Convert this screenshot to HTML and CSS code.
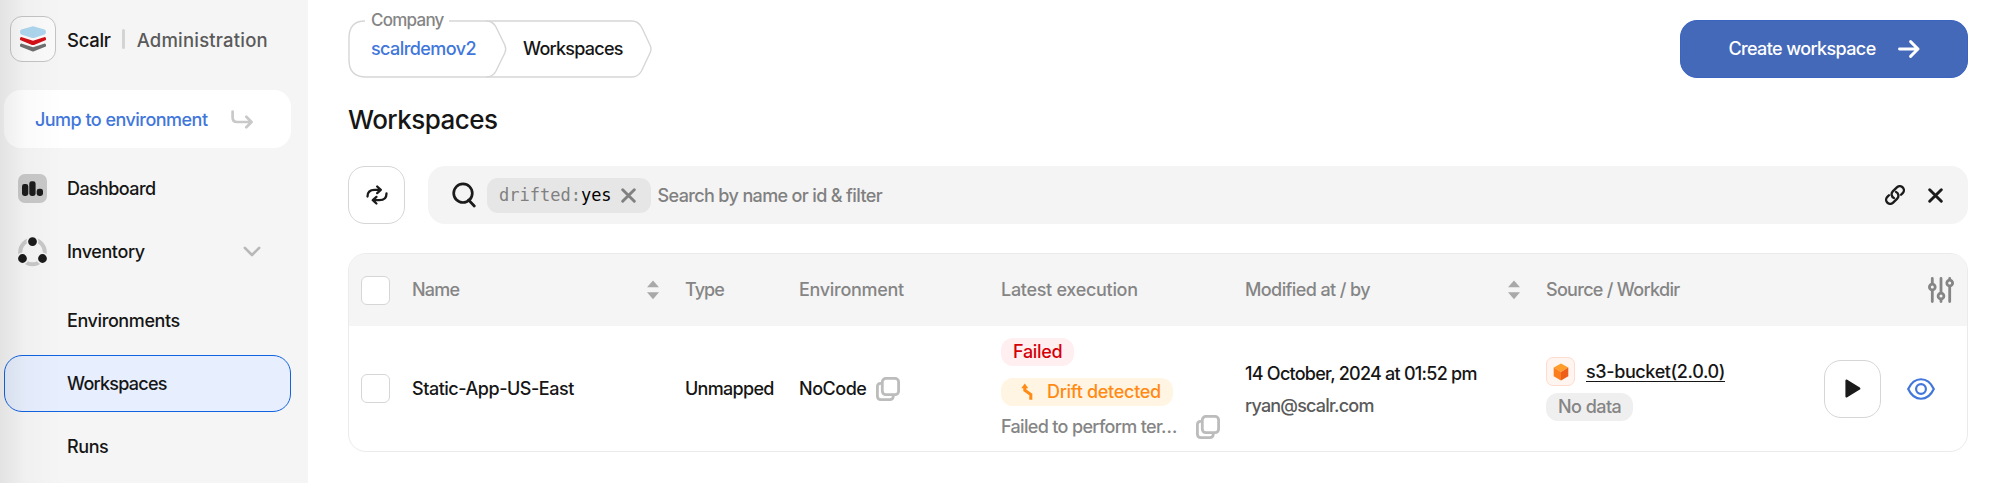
FILE: index.html
```html
<!DOCTYPE html>
<html lang="en">
<head>
    <meta charset="UTF-8">
    <meta name="viewport" content="width=device-width, initial-scale=1.0">
    <title>Workspaces - Scalr</title>
    <link rel="stylesheet" href="styles.css">
</head>
<body>
    <svg width="0" height="0" class="defs">
        <symbol id="copy" viewBox="0 0 24 24">
            <rect x="6.3" y="1.4" width="16.3" height="16.3" rx="3.6"/>
            <path d="M5.6 6.3H4.6Q1.4 6.3 1.4 9.6V19Q1.4 22.6 5 22.6H13.6Q17.3 22.6 17.3 19V18.2"/>
        </symbol>
        <symbol id="sort" viewBox="0 0 12 20">
            <path d="M6 .5 12 7.2H0Z"/>
            <path d="M6 19.3 0 12.3H12Z"/>
        </symbol>
    </svg>

    <aside class="sidebar">
        <header class="brand">
            <div class="logo">
                <svg width="26" height="26" viewBox="0 0 26 26">
                    <path fill="#6f6f6f" d="M1.2 17.4 13 21.2 24.8 17.4Q26.4 18 25.9 20.4L14 25.3Q13 25.7 12 25.3L.1 20.4Q-.4 18 1.2 17.4Z"/>
                    <path fill="#d40f16" d="M1.2 11 13 14.8 24.8 11Q26.4 11.6 25.9 14L14 18.9Q13 19.3 12 18.9L.1 14Q-.4 11.6 1.2 11Z"/>
                    <path fill="#add6ee" d="M12 .5Q13 .2 14 .5L24.6 3.4Q26 4 26 5.9Q26 7.8 24.6 8.4L14 11.9Q13 12.2 12 11.9L1.4 8.4Q0 7.8 0 5.9Q0 4 1.4 3.4Z"/>
                </svg>
            </div>
            <span class="brand-name">Scalr</span>
            <span class="brand-divider"></span>
            <span class="brand-section">Administration</span>
        </header>

        <a class="jump">
            <span class="jump-label">Jump to environment</span>
            <svg width="22" height="19" viewBox="0 0 22 19" fill="none" stroke="#c9c9c9" stroke-width="2.7" stroke-linecap="round" stroke-linejoin="round">
                <path d="M1.6 1.5V7.5Q1.6 12 6.1 12H20M15.3 6.7 20.5 12 15.3 17.3"/>
            </svg>
        </a>

        <nav class="nav">
            <a class="nav-item">
                <svg class="nav-icon" width="29" height="29" viewBox="0 0 29 29">
                    <rect width="29" height="29" rx="7" fill="#c8c8c8"/>
                    <rect x="4" y="10" width="6.3" height="12" rx="2.4" fill="#1b1b1b"/>
                    <rect x="11.3" y="7.3" width="6.3" height="14.7" rx="2.4" fill="#1b1b1b"/>
                    <rect x="18.7" y="14.7" width="6.3" height="7.3" rx="2.4" fill="#1b1b1b"/>
                </svg>
                <span class="t-dashboard">Dashboard</span>
            </a>
            <a class="nav-item">
                <svg class="nav-icon" width="29" height="29" viewBox="0 0 29 29">
                    <circle cx="14.5" cy="15" r="12.3" fill="none" stroke="#c8c8c8" stroke-width="4"/>
                    <g fill="#1b1b1b" stroke="#f5f5f5" stroke-width="1.6">
                        <circle cx="14.5" cy="4.6" r="5.2"/>
                        <circle cx="4.5" cy="21.5" r="5.2"/>
                        <circle cx="24.5" cy="21.5" r="5.2"/>
                    </g>
                </svg>
                <span class="t-inventory">Inventory</span>
                <svg class="chevron" width="18" height="11" viewBox="0 0 18 11" fill="none" stroke="#b8b8b8" stroke-width="2.6" stroke-linecap="round" stroke-linejoin="round">
                    <path d="M1.8 1.8 9 9 16.2 1.8"/>
                </svg>
            </a>
            <div class="subnav">
                <a class="nav-item"><span class="t-envs">Environments</span></a>
                <a class="nav-item active"><span class="t-workspaces">Workspaces</span></a>
                <a class="nav-item"><span class="t-runs">Runs</span></a>
            </div>
        </nav>
    </aside>

    <main class="main">
        <div class="topbar">
            <div class="breadcrumb">
                <svg class="breadcrumb-shape" width="304" height="58" viewBox="0 0 304 58" fill="none" stroke="#d6d6d6" stroke-width="1.4">
                    <path d="M101 1H284Q290 1 293.5 7L302 25Q304 29 302 33L293.5 51Q290 57 284 57H18Q1 57 1 40V18Q1 1 17 1"/>
                    <path d="M138 1Q145 1 148 7L156.8 25Q158.6 29 156.8 33L148 51Q145 57 138 57"/>
                </svg>
                <span class="breadcrumb-legend">Company</span>
                <a class="crumb-link">scalrdemov2</a>
                <span class="t-workspaces">Workspaces</span>
            </div>
            <button class="create-button">
                <span>Create workspace</span>
                <svg width="22" height="18" viewBox="0 0 22 18" fill="none" stroke="#fff" stroke-width="2.9" stroke-linecap="round" stroke-linejoin="round">
                    <path d="M1.5 9H20M12.6 1.6 20 9 12.6 16.4"/>
                </svg>
            </button>
        </div>

        <h1>Workspaces</h1>

        <div class="toolbar">
            <button class="square-button">
                <svg width="22" height="20" viewBox="0 0 22 20" fill="none" stroke="#1b1b1b" stroke-width="2.3" stroke-linecap="round" stroke-linejoin="round">
                    <path d="M1.5 11.5C1.5 7 4.5 4.8 8.5 4.8H14.5M11.2 1.5 14.8 4.8 11.2 8.1"/>
                    <path d="M20.5 8.5C20.5 13 17.5 15.2 13.5 15.2H7M10.4 11.9 6.8 15.2 10.4 18.5"/>
                </svg>
            </button>
            <div class="search">
                <svg class="search-icon" width="24" height="26" viewBox="0 0 24 26" fill="none" stroke="#1b1b1b" stroke-width="2.7" stroke-linecap="round">
                    <circle cx="11" cy="11.2" r="9.3"/>
                    <path d="M16.6 18 22.3 24"/>
                </svg>
                <div class="chip">
                    <span class="chip-key">drifted:</span><span class="chip-value">yes</span>
                    <svg width="15" height="15" viewBox="0 0 15 15" stroke="#808080" stroke-width="2.9" stroke-linecap="round">
                        <path d="M1.7 1.7 13.3 13.3M13.3 1.7 1.7 13.3"/>
                    </svg>
                </div>
                <span class="search-placeholder">Search by name or id &amp; filter</span>
                <svg class="link-icon" width="20" height="20" viewBox="1 1 22 22" fill="none" stroke="#1b1b1b" stroke-width="2.6" stroke-linecap="round" stroke-linejoin="round">
                    <path d="M13.19 8.688a4.5 4.5 0 0 1 1.242 7.244l-4.5 4.5a4.5 4.5 0 0 1-6.364-6.364l1.757-1.757m13.35-.622 1.757-1.757a4.5 4.5 0 0 0-6.364-6.364l-4.5 4.5a4.5 4.5 0 0 0 1.242 7.244"/>
                </svg>
                <svg width="15" height="15" viewBox="0 0 15 15" stroke="#1b1b1b" stroke-width="2.9" stroke-linecap="round">
                    <path d="M1.7 1.7 13.3 13.3M13.3 1.7 1.7 13.3"/>
                </svg>
            </div>
        </div>

        <section class="table">
            <div class="row head">
                <div class="cell"><span class="checkbox"></span></div>
                <div class="cell sortable"><span class="t-name">Name</span><svg class="sort" width="12" height="20"><use href="#sort"/></svg></div>
                <div class="cell"><span class="t-type">Type</span></div>
                <div class="cell"><span>Environment</span></div>
                <div class="cell"><span>Latest execution</span></div>
                <div class="cell sortable"><span class="t-modified">Modified at / by</span><svg class="sort" width="12" height="20"><use href="#sort"/></svg></div>
                <div class="cell"><span class="t-source">Source / Workdir</span></div>
                <div class="cell settings">
                    <svg width="26" height="26" viewBox="0 0 26 26" fill="none" stroke="#858585" stroke-width="2.8" stroke-linecap="round">
                        <path d="M4.3 1.5V6M4.3 14V24.5M13 1.5V15M13 23V24.5M21.7 1.5V2.5M21.7 10V24.5"/>
                        <circle cx="4.3" cy="10" r="2.9"/>
                        <circle cx="13" cy="19" r="2.9"/>
                        <circle cx="21.7" cy="6" r="2.9"/>
                    </svg>
                </div>
            </div>

            <div class="row body">
                <div class="cell"><span class="checkbox"></span></div>
                <div class="cell"><span class="t-app">Static-App-US-East</span></div>
                <div class="cell"><span class="t-unmapped">Unmapped</span></div>
                <div class="cell environment">
                    <span class="t-nocode">NoCode</span>
                    <svg class="copy" width="24" height="24"><use href="#copy"/></svg>
                </div>
                <div class="cell execution">
                    <span class="badge failed">Failed</span>
                    <span class="badge drift">
                        <svg width="13" height="18" viewBox="0 0 13 18" fill="none" stroke="#ff8a14" stroke-width="3">
                            <path d="M3.8 3.5V7.2L9.8 11.5V16.8"/>
                            <path d="M.3 5.2 3.8.6 7.3 5.2Z" fill="#ff8a14" stroke="none"/>
                        </svg>
                        <span>Drift detected</span>
                    </span>
                    <div class="message">
                        <span class="message-text">Failed to perform ter…</span>
                        <svg class="copy" width="24" height="24"><use href="#copy"/></svg>
                    </div>
                </div>
                <div class="cell modified">
                    <span class="date">14 October, 2024 at 01:52 pm</span>
                    <span class="author">ryan@scalr.com</span>
                </div>
                <div class="cell source">
                    <div class="module">
                        <span class="module-icon">
                            <svg width="16" height="18" viewBox="0 0 16 18">
                                <path fill="#ff9d2b" d="M8 .5 15.3 4.6 8 9 .7 4.6Z"/>
                                <path fill="#fb7d1e" d="M.7 4.6 8 9V17.5L.7 13.3Z"/>
                                <path fill="#ee5d1a" d="M15.3 4.6V13.3L8 17.5V9Z"/>
                            </svg>
                        </span>
                        <a class="module-link">s3-bucket(2.0.0)</a>
                    </div>
                    <span class="badge empty">No data</span>
                </div>
                <div class="cell actions">
                    <button class="square-button">
                        <svg width="16" height="19" viewBox="0 0 16 19">
                            <path fill="#1b1b1b" stroke="#1b1b1b" stroke-width="2.4" stroke-linejoin="round" d="M1.6 1.7 14.2 9.5 1.6 17.3Z"/>
                        </svg>
                    </button>
                    <svg width="28" height="22" viewBox="0 0 28 22" fill="none" stroke="#4176db" stroke-width="2.2" stroke-linejoin="round">
                        <path d="M1.2 11C7.3-2 20.7-2 26.8 11C20.7 24 7.3 24 1.2 11Z"/>
                        <circle cx="14" cy="11" r="4.9"/>
                    </svg>
                </div>
            </div>
        </section>
    </main>
</body>
</html>
```

FILE: styles.css
```css
:root {
    --text-color: #161616;
    --muted-color: #858585;
    --link-color: #4176db;
    --border-color: #d6d6d6;
    --panel-color: #f5f5f5;
}

* {
    box-sizing: border-box;
}

body {
    margin: 0;
    display: flex;
    height: 483px;
    overflow: hidden;
    background-color: #fff;
    color: var(--text-color);
    font-family: Inter, sans-serif;
    font-size: 18px;
    font-weight: 500;
    line-height: 24px;
    letter-spacing: -0.3px;
    white-space: nowrap;
}

svg {
    display: block;
    flex: none;
}

.defs {
    position: absolute;
}

button {
    font: inherit;
    letter-spacing: inherit;
    padding: 0;
}

/* Sidebar */
.sidebar {
    position: relative;
    width: 308px;
    flex: none;
    padding: 16px 17px 0 4px;
    background-color: var(--panel-color);
}

.sidebar::after {
    content: "";
    position: absolute;
    top: 0;
    bottom: 0;
    left: 0;
    width: 64px;
    background: linear-gradient(to right, rgba(0, 0, 0, 0.075), rgba(0, 0, 0, 0.02) 40%, transparent);
    pointer-events: none;
}

.brand {
    display: flex;
    align-items: center;
    height: 46px;
    padding-left: 6px;
}

.logo {
    display: flex;
    align-items: center;
    justify-content: center;
    width: 46px;
    height: 46px;
    margin-right: 11px;
    border: 1px solid #c4c4c4;
    border-radius: 12px;
    background-color: #fafafa;
}

.brand-name,
.brand-section {
    padding-top: 1px;
    font-size: 18.5px;
}

.brand-divider {
    width: 3px;
    height: 20px;
    margin: 0 12px 0 11px;
    border-radius: 2px;
    background-color: #d4d4d4;
}

.brand-section {
    color: #5a5a5a;
    letter-spacing: 0.2px;
}

.jump {
    display: flex;
    align-items: center;
    gap: 24px;
    height: 58px;
    margin-top: 28px;
    padding-left: 31px;
    border-radius: 17px;
    background-color: #fff;
    color: var(--link-color);
    letter-spacing: -0.53px;
}

.jump-label {
    padding-top: 1px;
}

.nav {
    display: flex;
    flex-direction: column;
    gap: 6px;
    margin-top: 12px;
}

.subnav {
    display: flex;
    flex-direction: column;
    gap: 6px;
    margin-top: 6px;
}

.nav-item {
    display: flex;
    align-items: center;
    height: 57px;
    padding: 0 29px 0 13px;
    border: 1px solid transparent;
    border-radius: 18px;
}

.nav-icon {
    margin-right: 20px;
    overflow: visible;
}

.chevron {
    margin-left: auto;
}

.subnav .nav-item {
    padding-left: 62px;
}

.subnav .nav-item.active {
    border-color: #1263e0;
    background-color: #e7eefd;
}

.t-dashboard {
    letter-spacing: -0.6px;
}

.t-inventory,
.t-envs,
.t-runs {
    letter-spacing: -0.4px;
}

.t-workspaces {
    letter-spacing: -0.75px;
}

/* Main area */
.main {
    flex: 1;
    padding: 20px 32px 0 40px;
}

.topbar {
    display: flex;
    justify-content: space-between;
    height: 58px;
}

.breadcrumb {
    position: relative;
    display: flex;
    align-items: center;
    gap: 47px;
    width: 304px;
    padding-left: 23px;
}

.breadcrumb-shape {
    position: absolute;
    top: 0;
    left: 0;
}

.breadcrumb-legend {
    position: absolute;
    top: -12px;
    left: 23px;
    color: var(--muted-color);
    font-size: 17px;
    letter-spacing: -0.75px;
}

.crumb-link {
    color: var(--link-color);
    letter-spacing: -0.57px;
}

.create-button {
    display: flex;
    align-items: center;
    justify-content: center;
    gap: 22px;
    width: 288px;
    height: 58px;
    border: 1px solid #3a64c0;
    border-radius: 17px;
    background-color: #4569b9;
    color: #fff;
    letter-spacing: -0.62px;
}

h1 {
    margin: 25px 0 0;
    font-size: 26px;
    font-weight: 500;
    line-height: 34px;
    letter-spacing: -0.55px;
}

.toolbar {
    display: flex;
    gap: 23px;
    margin-top: 29px;
}

.square-button {
    display: flex;
    align-items: center;
    justify-content: center;
    width: 57px;
    height: 58px;
    border: 1px solid var(--border-color);
    border-radius: 17px;
    background-color: #fff;
}

.search {
    display: flex;
    flex: 1;
    align-items: center;
    height: 58px;
    padding: 0 25px 0 24px;
    border-radius: 17px;
    background-color: #f4f4f4;
}

.chip {
    display: flex;
    align-items: center;
    height: 35px;
    margin: 0 7px 0 11px;
    padding: 0 15px 0 12px;
    border-radius: 11px;
    background-color: #e6e6e6;
    font-family: "DejaVu Sans Mono", monospace;
    font-size: 17px;
    font-weight: 400;
    letter-spacing: 0;
}

.chip-key {
    color: #808080;
}

.chip-value {
    color: #000;
}

.chip svg {
    margin-left: 9px;
}

.search-placeholder {
    padding-top: 1px;
    color: #808080;
    letter-spacing: -0.64px;
}

.link-icon {
    margin-left: auto;
    margin-right: 23px;
}

/* Workspaces table */
.table {
    margin-top: 29px;
    height: 199px;
    border: 1px solid #ebebeb;
    border-radius: 18px;
    overflow: hidden;
}

.row {
    display: grid;
    grid-template-columns: 63px 273px 114px 202px 244px 301px 220px 1fr;
}

.head {
    height: 72px;
    background-color: #f5f5f5;
    color: var(--muted-color);
}

.body {
    height: 125px;
}

.cell {
    display: flex;
    align-items: center;
}

.checkbox {
    width: 29px;
    height: 29px;
    margin-left: 12px;
    border: 1.5px solid var(--border-color);
    border-radius: 6px;
    background-color: #fff;
}

.sortable {
    justify-content: space-between;
    padding-right: 26px;
}

.sort {
    fill: #a9a9a9;
}

.settings {
    justify-content: flex-end;
    padding-right: 13px;
}

.t-name {
    letter-spacing: -0.75px;
}

.t-type {
    letter-spacing: -0.95px;
}

.t-modified {
    letter-spacing: -0.6px;
}

.t-source,
.t-unmapped {
    letter-spacing: -0.7px;
}

.t-app,
.t-nocode {
    letter-spacing: -0.47px;
}

.t-app,
.t-unmapped,
.t-nocode {
    padding-top: 1px;
}

.copy {
    fill: none;
    stroke: #bcbcbc;
    stroke-width: 2.8;
}

.environment {
    gap: 10px;
}

.execution {
    flex-direction: column;
    align-items: flex-start;
    padding-top: 12px;
}

.badge {
    display: inline-flex;
    align-items: center;
    height: 28px;
    padding: 0 12px;
    border-radius: 12px;
}

.badge.failed {
    background-color: #ffeff0;
    color: #d40009;
}

.badge.drift {
    margin-top: 12px;
    padding-left: 20px;
    gap: 13px;
    background-color: #fff5e2;
    color: #ff8a14;
}

.badge.empty {
    background-color: #efefef;
    color: var(--muted-color);
    letter-spacing: -0.55px;
}

.message {
    display: flex;
    align-items: center;
    justify-content: space-between;
    width: 219px;
    margin-top: 9px;
    color: var(--muted-color);
}

.message-text {
    letter-spacing: -0.67px;
}

.modified {
    flex-direction: column;
    align-items: flex-start;
    justify-content: center;
    gap: 8px;
    padding-top: 3px;
}

.date {
    letter-spacing: -0.75px;
}

.author {
    color: #5a5a5a;
    letter-spacing: -0.8px;
}

.source {
    flex-direction: column;
    align-items: flex-start;
    padding-top: 31px;
    gap: 7px;
}

.module {
    display: flex;
    align-items: center;
    gap: 11px;
}

.module-icon {
    display: flex;
    align-items: center;
    justify-content: center;
    width: 29px;
    height: 29px;
    border: 1.5px solid #ffdccd;
    border-radius: 7px;
    background-color: #fff5f0;
}

.module-link {
    letter-spacing: -0.38px;
    text-decoration: underline;
    text-underline-offset: 3px;
}

.actions {
    justify-content: flex-end;
    gap: 26px;
    padding-right: 32px;
}
```
